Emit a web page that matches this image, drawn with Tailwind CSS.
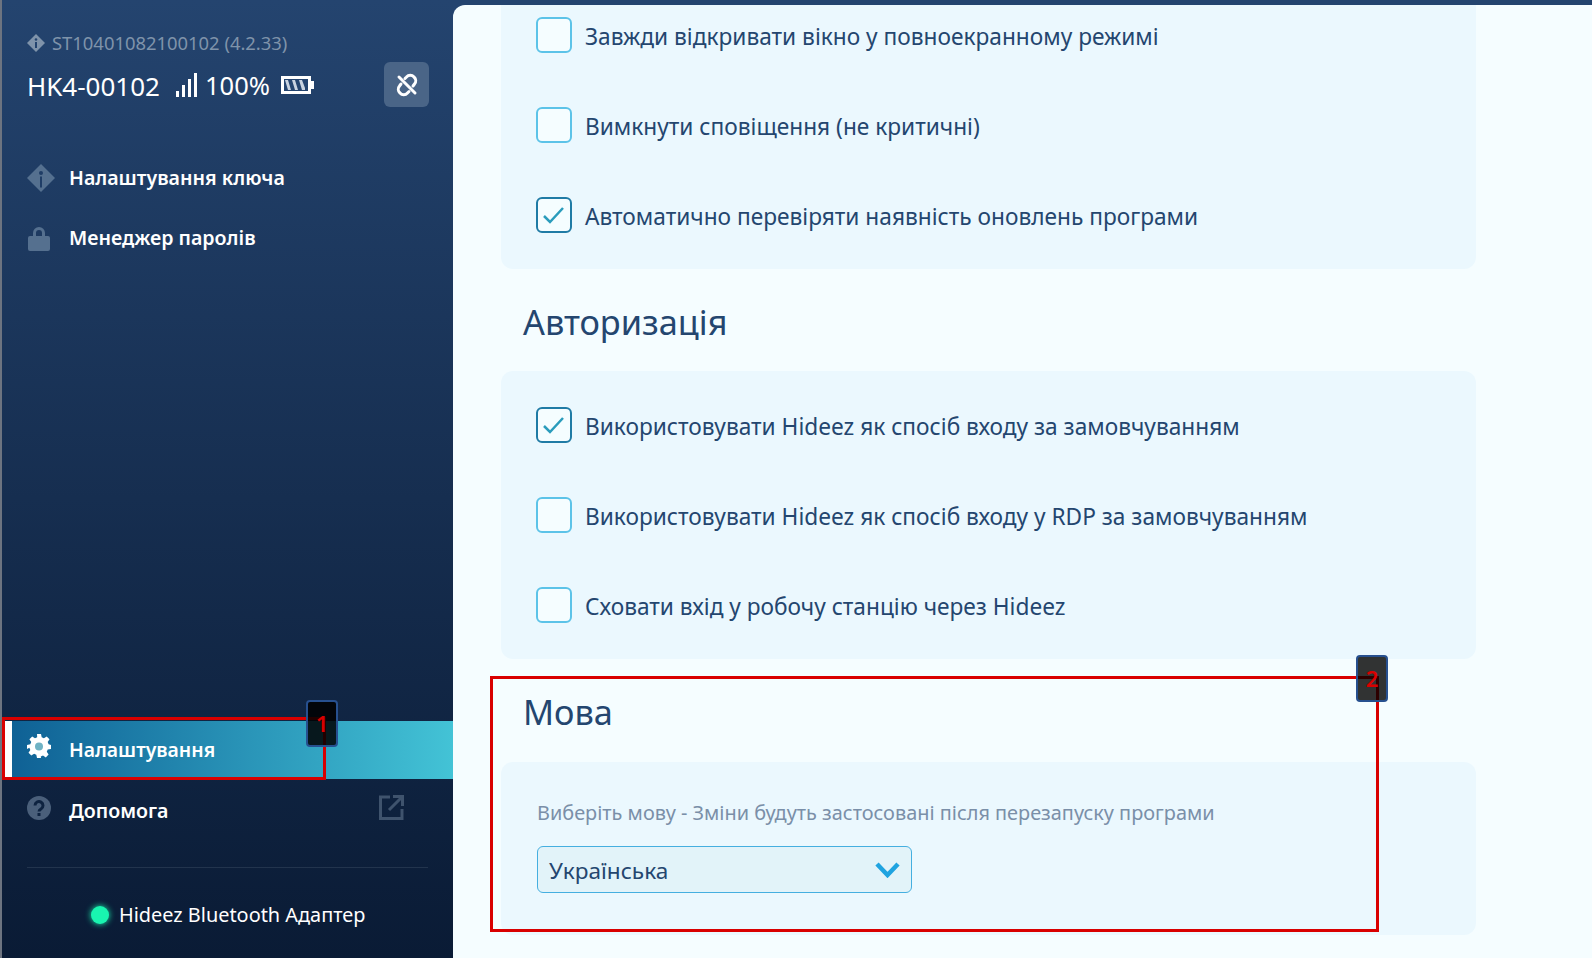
<!DOCTYPE html>
<html lang="uk"><head><meta charset="utf-8">
<script src="https://cdn.jsdelivr.net/npm/@tailwindcss/browser@4"></script>
</head>
<body class="m-0 overflow-hidden bg-[#24446f]">
<div class="relative flex h-[958px] w-[1592px] overflow-hidden font-['Noto_Sans',sans-serif]">
  <aside class="flex h-full w-[453px] shrink-0 flex-col border-l-2 border-[#6d7480] bg-gradient-to-b from-[#24446f] to-[#0a1b35] text-white">
    <div class="pl-[25px] pr-[24px] pt-[32px]">
      <div class="flex h-[22px] items-center gap-[7px] text-[18.400px] leading-none text-[#7f93aa]">
        <svg class="h-[18px] w-[18px]" viewBox="0 0 18 18"><path fill="#7f93aa" d="M9 0l9 9-9 9-9-9z"/><circle cx="9" cy="5.500" r="1.300" fill="#24446f"/><rect x="8" y="8" width="2" height="6" fill="#24446f"/></svg>
        <span>ST10401082100102 (4.2.33)</span>
      </div>
      <div class="mt-[8px] flex h-[45px] items-center">
        <span class="mt-[2px] text-[26px] leading-none">HK4-00102</span>
        <svg class="ml-[16px] h-[24px] w-[21px]" viewBox="0 0 21 24" fill="#fff"><rect x="0" y="18" width="3" height="6"/><rect x="6" y="12" width="3" height="12"/><rect x="12" y="6" width="3" height="18"/><rect x="18" y="0" width="3" height="24"/></svg>
        <span class="mt-[2px] ml-[8px] text-[25.500px] leading-none">100%</span>
        <svg class="ml-[11px] h-[18px] w-[33px]" viewBox="0 0 33 18"><rect x="1.500" y="1.500" width="27" height="15" fill="#24446f" stroke="#fff" stroke-width="3"/><rect x="29" y="5" width="4" height="8" fill="#fff"/><path d="M4 4h3l3 10H7zM11 4h3l3 10h-3zM18 4h3l3 8v2h-3z" fill="#c9d3e0"/></svg>
        <div class="ml-auto flex h-[45px] w-[45px] items-center justify-center rounded-[6px] bg-[#4a6587]">
          <svg class="h-[24px] w-[24px]" viewBox="0 0 24 24" fill="none" stroke="#fff" stroke-width="3" stroke-linecap="round"><path d="M10 5.500l1.500-1.500a5 5 0 0 1 7.500 0 5 5 0 0 1 .5 7L18 13"/><path d="M14 18.500l-1.500 1.500a5 5 0 0 1-7.500 0 5 5 0 0 1-.5-7L6 11"/><path d="M4 4l16 16"/></svg>
        </div>
      </div>
    </div>
    <nav class="mt-[41px] flex flex-col text-[19.600px] font-semibold">
      <div class="flex h-[60px] items-center pl-[25px]">
        <svg class="h-[28px] w-[28px]" viewBox="0 0 28 28"><path fill="#55708f" d="M14 0l14 14-14 14L0 14z"/><circle cx="14" cy="9" r="2" fill="#1f3d66"/><rect x="13" y="12.500" width="2" height="11" fill="#1f3d66"/></svg>
        <span class="ml-[14px]">Налаштування ключа</span>
      </div>
      <div class="flex h-[60px] items-center pl-[26px]">
        <svg class="h-[25px] w-[22px]" viewBox="0 0 22 25" fill="#55708f"><rect x="0" y="10" width="22" height="15" rx="2"/><path d="M5 11V7a6 6 0 0 1 12 0v4h-3V7a3 3 0 0 0-6 0v4z"/></svg>
        <span class="ml-[19px]">Менеджер паролів</span>
      </div>
    </nav>
    <div class="mt-auto">
      <div class="flex h-[58px] items-center border-l-[10px] border-white bg-gradient-to-r from-[#0f6195] to-[#43c3d6] pl-[15px] text-[19.400px] font-semibold">
        <svg class="-mt-[8px] h-[24px] w-[24px]" viewBox="0 0 24 24"><path fill="#fff" fill-rule="evenodd" d="M10 0h4l.7 3.300 2.200.9L19.700 2.400l2.800 2.800-1.800 2.800.9 2.200L24 10.900v4l-3.300.7-.9 2.200 1.800 2.800-2.800 2.800-2.800-1.800-2.200.9L14 24h-4l-.7-3.300-2.200-.9-2.800 1.800-2.800-2.800 1.800-2.800-.9-2.200L0 14.900v-4l3.300-.7.9-2.200L2.400 5.200 5.200 2.400 8 4.200l2.200-.9z"/><circle cx="12" cy="12.500" r="4" fill="#6fb2c4"/></svg>
        <span class="ml-[18px]">Налаштування</span>
      </div>
      <div class="flex h-[60px] items-center pl-[25px] pr-[49px] text-[19.600px] font-semibold">
        <svg class="-mt-[2px] h-[24px] w-[24px]" viewBox="0 0 24 24"><circle cx="12" cy="12" r="12" fill="#4a5f7a"/><path d="M8 9.500a4 4 0 1 1 6 3.500c-1.300.8-2 1.200-2 2.500" fill="none" stroke="#0e2340" stroke-width="3"/><rect x="10.500" y="17" width="3" height="3" fill="#0e2340"/></svg>
        <span class="ml-[18px] mt-[4px]">Допомога</span>
        <svg class="-mt-[4px] ml-auto h-[25px] w-[25px]" viewBox="0 0 25 25" fill="none" stroke="#3f536d" stroke-width="3"><path d="M11 2H1.500v21.500h21.500V14"/><path d="M10 15L23 2M14 1.500h9.500V11"/></svg>
      </div>
      <div class="mx-[25px] mt-[28px] h-px bg-[#22344d]"></div>
      <div class="flex h-[90px] items-center pt-[4px] pl-[89px] text-[19.900px] leading-none">
        <span class="h-[18px] w-[18px] rounded-full bg-[#19f5b0] shadow-[0_0_6px_#19f5b0]"></span>
        <span class="ml-[10px]">Hideez Bluetooth Адаптер</span>
      </div>
    </div>
  </aside>
  <main class="mt-[5px] flex-1 rounded-tl-[12px] bg-[#f5fdff] pl-[48px] text-[#24466f]">
    <section class="flex h-[264px] w-[975px] flex-col rounded-b-[12px] bg-[#ebf8fe] pl-[35px] pt-[12px] text-[22.700px] leading-none">
      <label class="flex h-[36px] items-center"><span class="h-[36px] w-[36px] rounded-[6px] border-2 border-[#5cc3e8] bg-[#f5fdff]"></span><span class="ml-[13px] mt-[4px]">Завжди відкривати вікно у повноекранному режимі</span></label>
      <label class="mt-[54px] flex h-[36px] items-center"><span class="h-[36px] w-[36px] rounded-[6px] border-2 border-[#5cc3e8] bg-[#f5fdff]"></span><span class="ml-[13px] mt-[4px]">Вимкнути сповіщення (не критичні)</span></label>
      <label class="mt-[54px] flex h-[36px] items-center"><span class="flex h-[36px] w-[36px] items-center justify-center rounded-[6px] border-2 border-[#1f7ba5] bg-[#f5fdff]"><svg class="h-[24px] w-[24px]" viewBox="0 0 24 24" fill="none" stroke="#2a9cbc" stroke-width="2.500"><path d="M2 13l6 6L21 5"/></svg></span><span class="ml-[13px] mt-[4px]">Автоматично перевіряти наявність оновлень програми</span></label>
    </section>
    <h2 class="flex h-[102px] items-center pl-[22px] pt-[4px] text-[34.300px] font-normal">Авторизація</h2>
    <section class="flex h-[288px] w-[975px] flex-col rounded-[12px] bg-[#ebf8fe] pl-[35px] pt-[36px] text-[22.700px] leading-none">
      <label class="flex h-[36px] items-center"><span class="flex h-[36px] w-[36px] items-center justify-center rounded-[6px] border-2 border-[#1f7ba5] bg-[#f5fdff]"><svg class="h-[24px] w-[24px]" viewBox="0 0 24 24" fill="none" stroke="#2a9cbc" stroke-width="2.500"><path d="M2 13l6 6L21 5"/></svg></span><span class="ml-[13px] mt-[4px]">Використовувати Hideez як спосіб входу за замовчуванням</span></label>
      <label class="mt-[54px] flex h-[36px] items-center"><span class="h-[36px] w-[36px] rounded-[6px] border-2 border-[#5cc3e8] bg-[#f5fdff]"></span><span class="ml-[13px] mt-[4px]">Використовувати Hideez як спосіб входу у RDP за замовчуванням</span></label>
      <label class="mt-[54px] flex h-[36px] items-center"><span class="h-[36px] w-[36px] rounded-[6px] border-2 border-[#5cc3e8] bg-[#f5fdff]"></span><span class="ml-[13px] mt-[4px]">Сховати вхід у робочу станцію через Hideez</span></label>
    </section>
    <h2 class="flex h-[103px] items-center pl-[22px] pt-[2px] text-[34.300px] font-normal">Мова</h2>
    <section class="h-[173px] w-[975px] rounded-[12px] bg-[#ebf8fe] pl-[36px] pt-[39px]">
      <p class="h-[24px] text-[19.900px] leading-[24px] text-[#7a8fa8]">Виберіть мову - Зміни будуть застосовані після перезапуску програми</p>
      <div class="mt-[21px] flex h-[47px] w-[375px] items-center justify-between rounded-[6px] border border-[#45afe0] bg-[#e2f3f9] pl-[11px] pr-[11px] text-[22.600px] leading-none">
        <span class="mt-[4px]">Українська</span>
        <svg class="h-[16px] w-[25px]" viewBox="0 0 25 16" fill="none" stroke="#1fa3e0" stroke-width="4.500"><path d="M2 2l10.500 11L23 2"/></svg>
      </div>
    </section>
  </main>
  <div class="absolute left-[2px] top-[717px] h-[63px] w-[324px] border-[3px] border-[#d90000]"></div>
  <div class="absolute left-[306px] top-[700px] flex h-[47px] w-[32px] items-start justify-center rounded-[4px] border-2 border-[#27508f] bg-[#000]/85 pt-[8px] text-[22px] font-semibold leading-[26px] text-[#d90000]">1</div>
  <div class="absolute left-[490px] top-[676px] h-[256px] w-[889px] border-[3px] border-[#d90000]"></div>
  <div class="absolute left-[1356px] top-[655px] flex h-[47px] w-[32px] items-start justify-center rounded-[4px] border-2 border-[#27508f] bg-[#000]/80 pt-[8px] text-[22px] font-semibold leading-[26px] text-[#d90000]">2</div>
</div>
</body></html>
